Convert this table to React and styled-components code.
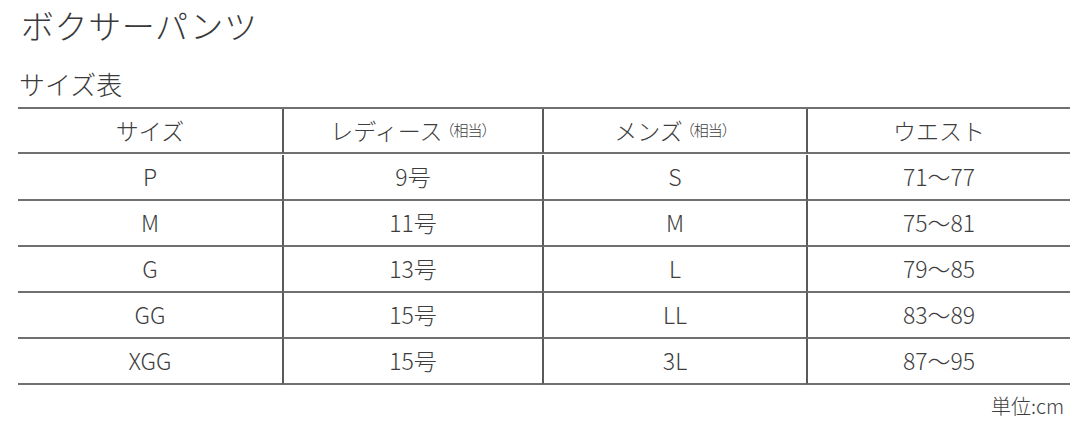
import React from 'react'
import styled, { createGlobalStyle } from 'styled-components'

const GlobalStyle = createGlobalStyle`
  html, body {
    margin: 0;
    padding: 0;
    background: #fff;
  }
  body {
    font-family: "Noto Sans CJK JP", "Noto Sans", sans-serif;
    color: #404040;
  }
`

const headers = [
  { label: 'サイズ' },
  { label: 'レディース', note: '（相当）' },
  { label: 'メンズ', note: '（相当）' },
  { label: 'ウエスト' },
]

const rows = [
  ['P', '9号', 'S', '71〜77'],
  ['M', '11号', 'M', '75〜81'],
  ['G', '13号', 'L', '79〜85'],
  ['GG', '15号', 'LL', '83〜89'],
  ['XGG', '15号', '3L', '87〜95'],
]

export default function App() {
  return (
    <Page>
      <GlobalStyle />
      <Title>ボクサーパンツ</Title>
      <SubTitle>サイズ表</SubTitle>
      <Table>
        {headers.map((h, i) => (
          <Cell key={h.label} $first={i === 0} $head>
            {h.label}
            {h.note && <Note>{h.note}</Note>}
          </Cell>
        ))}
        {rows.map((r) =>
          r.map((v, i) => (
            <Cell key={r[0] + i} $first={i === 0}>
              {v}
            </Cell>
          ))
        )}
      </Table>
      <Unit>単位:cm</Unit>
    </Page>
  )
}

const Page = styled.div`
  width: 1080px;
  height: 448px;
  box-sizing: border-box;
  padding: 0 10px 0 18px;
  display: flex;
  flex-direction: column;
`

const Title = styled.h1`
  margin: 0 0 0 3px;
  font-size: 33px;
  font-weight: 300;
  line-height: 50px;
  letter-spacing: 0.6px;
  color: #3a3a3a;
`

const SubTitle = styled.h2`
  margin: 17px 0 0 1px;
  font-size: 26px;
  font-weight: 300;
  line-height: 34px;
  color: #3a3a3a;
`

const Table = styled.div`
  margin-top: 6px;
  display: grid;
  grid-template-columns: 264px 260px 264px 264px;
  grid-auto-rows: 46px;
  border-top: 2px solid #707070;
`

const Cell = styled.div`
  display: flex;
  align-items: center;
  justify-content: center;
  box-sizing: border-box;
  border-bottom: 2px solid #707070;
  border-left: ${(p) => (p.$first ? 'none' : '2px solid #5a5a5a')};
  font-size: 23px;
  font-weight: 300;
  color: #3d3d3d;
  padding-bottom: 2px;
  &:nth-child(-n + 4) {
    height: 45px;
  }
`

const Note = styled.span`
  font-size: 15px;
  margin-left: -3px;
  letter-spacing: -1px;
`

const Unit = styled.div`
  align-self: flex-end;
  margin: 6px 6px 0 0;
  font-size: 20px;
  font-weight: 300;
  color: #3d3d3d;
`
